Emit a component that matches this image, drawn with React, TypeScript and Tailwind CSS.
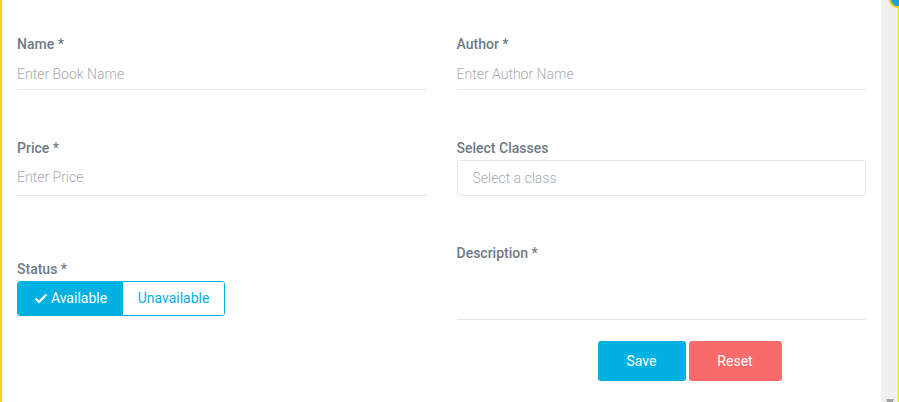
import React from "react";

const font = { fontFamily: "Roboto, 'Noto Sans', sans-serif" };

function Label({ children }: { children: React.ReactNode }) {
  return (
    <div className="h-[18px] text-[14px] leading-[18px] font-medium text-[#6f7a86]">
      {children}
    </div>
  );
}

function LineInput({ placeholder, className = "" }: { placeholder: string; className?: string }) {
  return (
    <div
      className={
        "border-b border-[#e5e7e9] flex items-center text-[14px] font-light text-[#a3acb5] " +
        className
      }
    >
      {placeholder}
    </div>
  );
}

export default function App() {
  return (
    <div className="w-[899px] h-[402px] flex overflow-hidden relative bg-white" style={font}>
      <div className="w-[2px] bg-[#f7d417]" />
      <div className="flex-1 px-[15px] grid grid-cols-2 gap-x-[30px]">
        {/* left column */}
        <div className="flex flex-col pt-[35px]">
          <Label>Name *</Label>
          <LineInput placeholder="Enter Book Name" className="mt-[5px] h-[32px] pt-[1px]" />
          <div className="mt-[49px]">
            <Label>Price *</Label>
          </div>
          <LineInput placeholder="Enter Price" className="mt-[5px] h-[34px] pb-[2px]" />
          <div className="mt-[64px]">
            <Label>Status *</Label>
          </div>
          <div className="mt-[3px] flex w-[208px] h-[35px] rounded-[3px] border border-[#00b1e1] overflow-hidden text-[14px]">
            <div className="w-[105px] bg-[#00b1e1] text-white flex items-center justify-center gap-[3px]">
              <svg width="14" height="11" viewBox="0 0 14 11" fill="none">
                <path d="M1.5 5.5 L5 9 L12.5 1.5" stroke="white" strokeWidth="2.2" />
              </svg>
              <span>Available</span>
            </div>
            <div className="flex-1 bg-white text-[#00b1e1] flex items-center justify-center">
              Unavailable
            </div>
          </div>
        </div>
        {/* right column */}
        <div className="flex flex-col pt-[35px]">
          <Label>Author *</Label>
          <LineInput placeholder="Enter Author Name" className="mt-[5px] h-[32px] pt-[1px]" />
          <div className="mt-[49px]">
            <Label>Select Classes</Label>
          </div>
          <div className="mt-[3px] h-[36px] border border-[#e3e7eb] rounded-[3px] flex items-center pl-[15px] text-[14px] font-light text-[#a3acb5]">
            Select a class
          </div>
          <div className="mt-[48px]">
            <Label>Description *</Label>
          </div>
          <div className="h-[58px] border-b border-[#e5e7e9]" />
          <div className="mt-[21px] flex gap-[3px] pl-[141px]">
            <div className="w-[88px] h-[40px] rounded-[3px] bg-[#00b1e1] text-white text-[14px] flex items-center justify-center">
              Save
            </div>
            <div className="w-[93px] h-[40px] rounded-[3px] bg-[#f96a6a] text-white text-[14px] flex items-center justify-center">
              Reset
            </div>
          </div>
        </div>
      </div>
      <div className="w-[17px] bg-[#f0f0f0] relative">
        <svg className="absolute left-[5px] bottom-0" width="8" height="3" viewBox="0 0 8 3">
          <polygon points="0,0 8,0 7,3 1,3" fill="#a3a3a3" />
        </svg>
      </div>
      <div className="w-[1px] bg-[#f7d417]" />
      <div className="absolute right-[-7px] top-[-9px] w-[17px] h-[17px] rounded-full bg-[#1aa0d8] border-[2px] border-[#f2cf1a]" />
    </div>
  );
}
